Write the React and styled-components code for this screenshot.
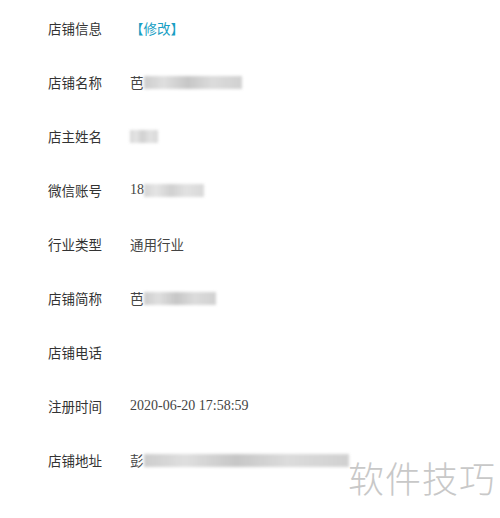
import React from 'react';
import styled, { createGlobalStyle } from 'styled-components';

const GlobalStyle = createGlobalStyle`
  html, body {
    margin: 0;
    padding: 0;
    background: #ffffff;
  }
  body {
    font-family: "Noto Sans CJK SC", "Liberation Sans", sans-serif;
  }
`

const Page = styled.div`
  position: relative;
  width: 500px;
  height: 518px;
  overflow: hidden;
  background: #fff;
  padding: 17px 0 0 48px;
  box-sizing: border-box;
`

const Row = styled.div`
  display: flex;
  align-items: center;
  height: 22px;
  margin-bottom: 32px;
`

const Label = styled.div`
  width: 82px;
  font-size: 13.5px;
  color: #333;
`

const Value = styled.div`
  display: flex;
  align-items: center;
  font-size: 13.5px;
  color: #444;
`

const Edit = styled.span`
  color: #1a9fc4;
  font-size: 13.5px;
`

const Digits = styled.span`
  font-family: "Liberation Serif", serif;
  font-size: 14px;
  color: #444;
`

const Blur = styled.span`
  display: inline-block;
  width: ${p => p.w}px;
  height: 13px;
  background: linear-gradient(90deg, #c4c4c4 0%, #dadada 20%, #bdbdbd 45%, #d6d6d6 70%, #c9c9c9 100%);
  filter: blur(1.6px);
  opacity: ${p => p.o || 0.85};
`

const Watermark = styled.div`
  position: absolute;
  right: 4px;
  bottom: 15px;
  font-size: 36px;
  color: #c8c8c8;
  letter-spacing: 1px;
  font-family: "Noto Sans CJK SC", sans-serif;
  font-weight: 300;
`

export default function App() {
  return (
    <Page>
      <GlobalStyle />
      <Row>
        <Label>店铺信息</Label>
        <Value><Edit>【修改】</Edit></Value>
      </Row>
      <Row>
        <Label>店铺名称</Label>
        <Value>芭<Blur w={98} /></Value>
      </Row>
      <Row>
        <Label>店主姓名</Label>
        <Value><Blur w={28} o={0.7} /></Value>
      </Row>
      <Row>
        <Label>微信账号</Label>
        <Value><Digits>18</Digits><Blur w={60} o={0.7} /></Value>
      </Row>
      <Row>
        <Label>行业类型</Label>
        <Value>通用行业</Value>
      </Row>
      <Row>
        <Label>店铺简称</Label>
        <Value>芭<Blur w={72} /></Value>
      </Row>
      <Row>
        <Label>店铺电话</Label>
        <Value></Value>
      </Row>
      <Row>
        <Label>注册时间</Label>
        <Value><Digits>2020-06-20 17:58:59</Digits></Value>
      </Row>
      <Row>
        <Label>店铺地址</Label>
        <Value>彭<Blur w={205} /></Value>
      </Row>
      <Watermark>软件技巧</Watermark>
    </Page>
  );
}
